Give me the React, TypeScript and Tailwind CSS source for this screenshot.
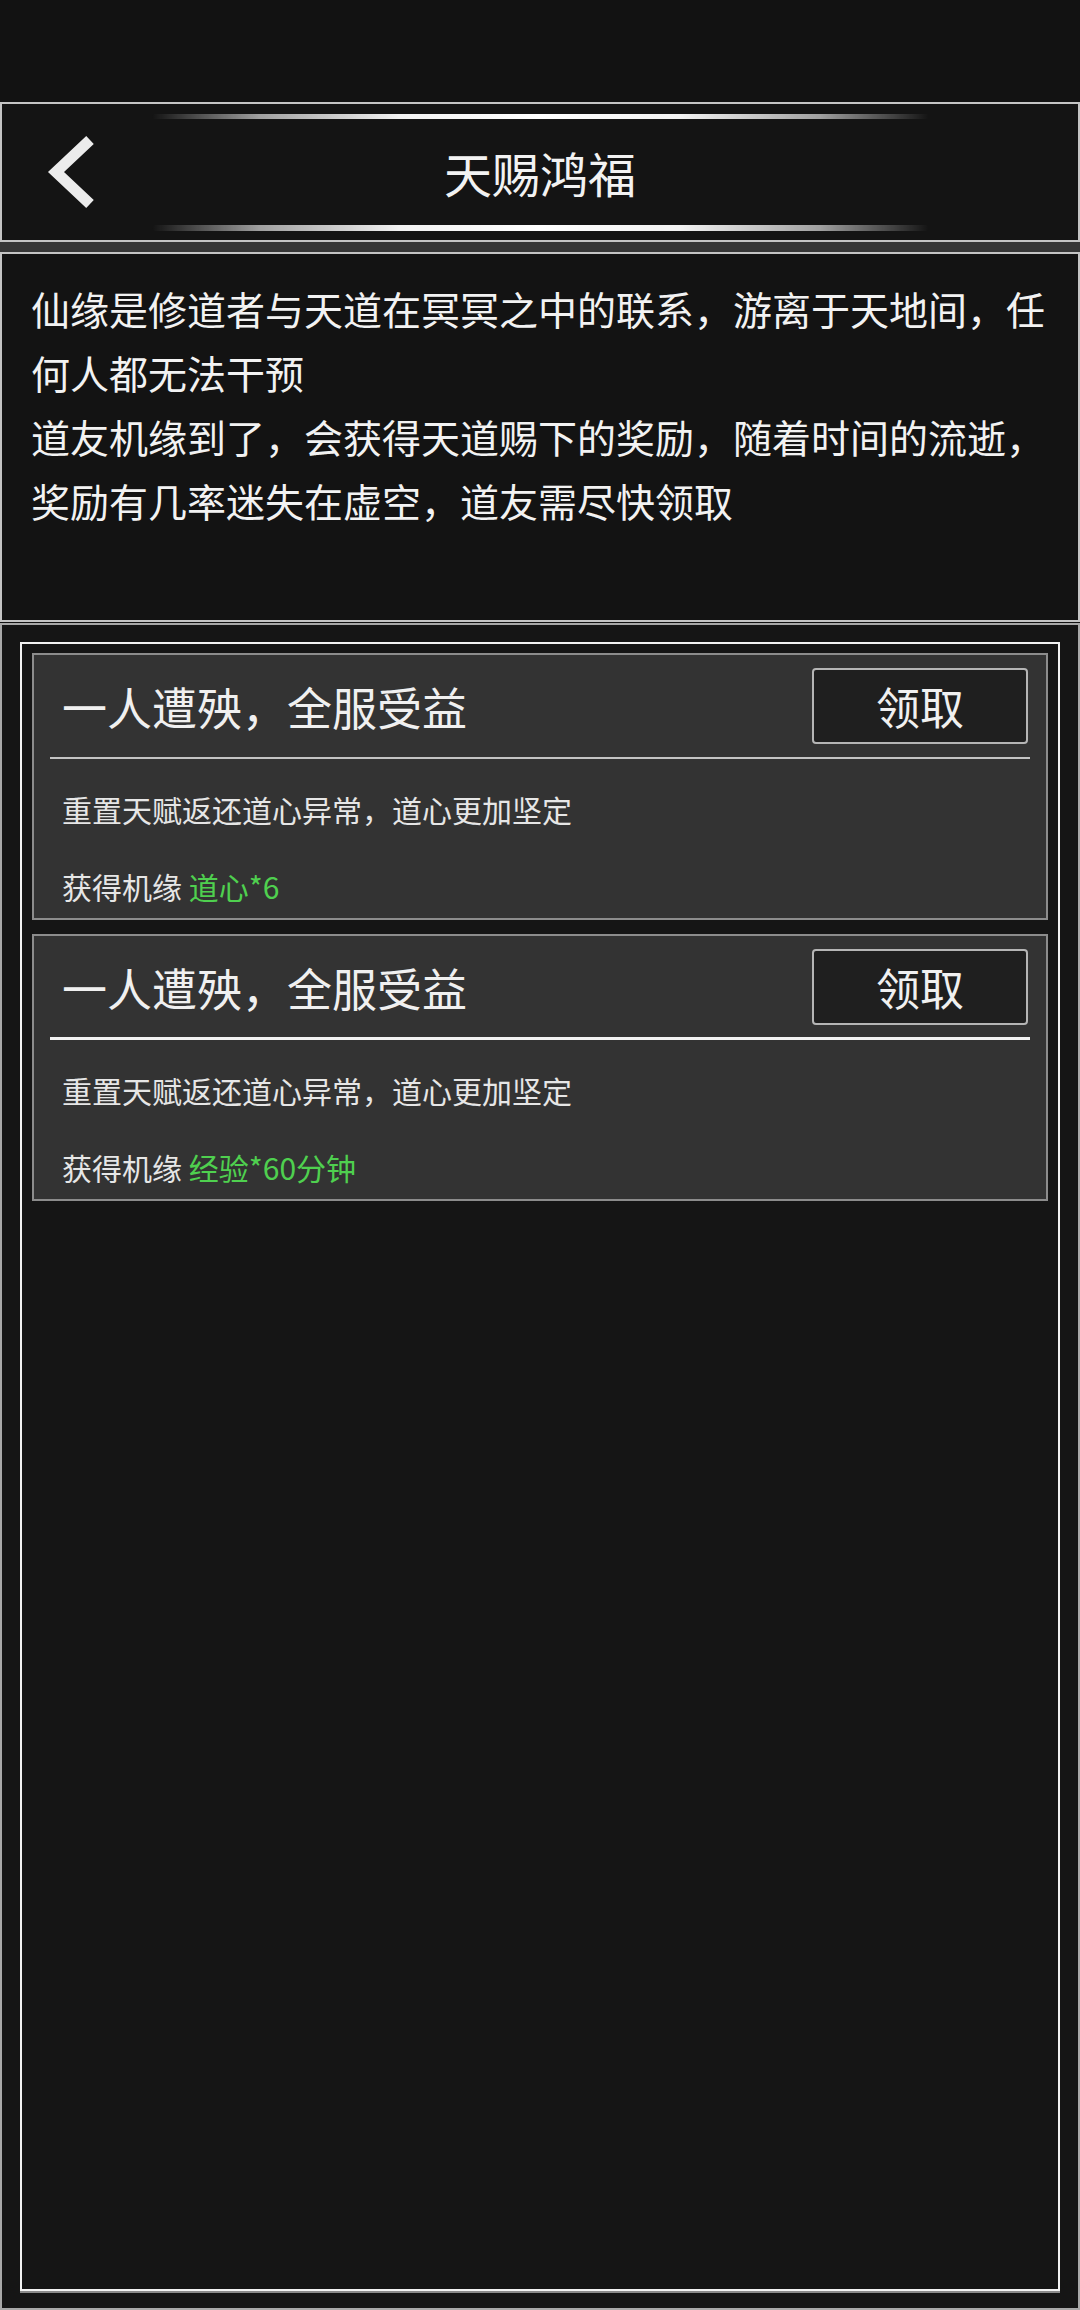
import React from "react";

const FONT = { fontFamily: '"Noto Sans CJK SC", "Noto Sans", sans-serif' };

function Glow({ thick }: { thick?: boolean }) {
  return (
    <div className="flex justify-center">
      <div
        className={
          (thick ? "h-[6px] " : "h-[5px] ") +
          "w-[777px] rounded-full blur-[0.6px] bg-[linear-gradient(90deg,rgba(255,255,255,0)_0%,rgba(255,255,255,0.6)_14%,rgba(255,255,255,0.95)_32%,#ffffff_50%,rgba(255,255,255,0.95)_68%,rgba(255,255,255,0.6)_86%,rgba(255,255,255,0)_100%)]"
        }
      />
    </div>
  );
}

function Card({ reward, strongDivider }: { reward: string; strongDivider?: boolean }) {
  return (
    <div className="border-2 border-[#8c8c8c] bg-[#333333] flex flex-col">
      <div className="flex items-center justify-between pl-[28px] pr-[18px] pt-[13px]">
        <span className="text-[45px] leading-[45px] text-[#f0f0f0]">一人遭殃，全服受益</span>
        <div className="w-[216px] h-[76px] rounded-[4px] border-2 border-[#b5b5b5] bg-[#1f1f1f] flex items-center justify-center">
          <span className="text-[44px] leading-[44px] text-[#f0f0f0]">领取</span>
        </div>
      </div>
      <div
        className={
          strongDivider
            ? "mt-[12px] mx-[16px] h-[3px] bg-[#f2f2f2]"
            : "mt-[13px] mx-[16px] h-[2px] bg-[#c4c4c4]"
        }
      />
      <div className="pl-[28px] mt-[35px] text-[30px] leading-[30px] text-[#e6e6e6]">
        重置天赋返还道心异常，道心更加坚定
      </div>
      <div className="pl-[28px] mt-[47px] pb-[17px] text-[30px] leading-[30px] text-[#e6e6e6]">
        获得机缘 <span className="text-[#4fd04f]">{reward}</span>
      </div>
    </div>
  );
}

export default function App() {
  return (
    <div className="w-[1080px] h-[2310px] bg-[#121212] flex flex-col overflow-hidden" style={FONT}>
      <div className="h-[102px] shrink-0" />

      <header className="h-[140px] shrink-0 border-2 border-[#c4c4c4] bg-[#141414] flex flex-col">
        <div className="pt-[10px]">
          <Glow />
        </div>
        <div className="flex-1 grid grid-cols-[1fr_auto_1fr] items-center">
          <div className="pl-[38px] flex items-center">
            <svg width="60" height="90" viewBox="0 0 60 90">
              <polyline
                points="50,13 16,45 50,77"
                fill="none"
                stroke="#ececec"
                strokeWidth="11"
                strokeLinecap="butt"
                strokeLinejoin="miter"
              />
            </svg>
          </div>
          <h1 className="text-[48px] leading-[48px] text-[#f2f2f2] font-normal">天赐鸿福</h1>
          <div />
        </div>
        <div className="pb-[9px]">
          <Glow thick />
        </div>
      </header>

      <div className="h-[10px] shrink-0 bg-[#363636]" />

      <section className="h-[370px] shrink-0 border-2 border-[#c4c4c4] bg-[#131313] pl-[29px] pr-[29px] pt-[22px]">
        <p className="text-[39px] leading-[64px] text-[#f2f2f2]">
          仙缘是修道者与天道在冥冥之中的联系，游离于天地间，任何人都无法干预
        </p>
        <p className="text-[39px] leading-[64px] text-[#f2f2f2]">
          道友机缘到了，会获得天道赐下的奖励，随着时间的流逝，奖励有几率迷失在虚空，道友需尽快领取
        </p>
      </section>

      <div className="h-[1px] shrink-0" />

      <section className="flex-1 border-2 border-[#a8a8a8] bg-[#151515] px-[18px] pt-[17px] pb-[17px] flex flex-col">
        <div className="flex-1 border-2 border-[#f2f2f2] shadow-[0_2px_0_#8a8a8a] px-[10px] pt-[9px] flex flex-col gap-[14px]">
          <Card reward="道心*6" />
          <Card reward="经验*60分钟" strongDivider />
        </div>
      </section>
    </div>
  );
}
